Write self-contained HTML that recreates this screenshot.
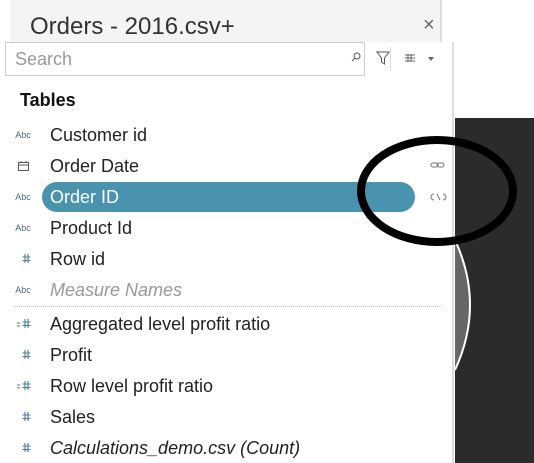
<!DOCTYPE html><html><head><style>
body{margin:0;width:534px;height:463px;overflow:hidden;background:#fff;font-family:"Liberation Sans",sans-serif;position:relative}
.a{position:absolute}
.row{position:absolute;left:50px;font-size:18px;color:#222;line-height:20px}
.ic{position:absolute;font-size:9px;color:#4a6a80;width:30px;left:8px;text-align:center}
</style></head><body>
<div class="a" style="left:10px;top:0;width:430px;height:42px;background:#f4f4f4;border-right:2px solid #ddd"></div>
<div class="a" style="left:30px;top:13px;font-size:24px;color:#333">Orders - 2016.csv+</div>
<div class="a" style="left:423px;top:14px;font-size:20px;color:#666">×</div>
<div class="a" style="left:452px;top:42px;width:2px;height:421px;background:#ddd"></div>
<div class="a" style="left:455px;top:118px;width:79px;height:345px;background:#2b2b2b"></div>
<div class="a" style="left:5px;top:42px;width:358px;height:32px;border:1px solid #ccc;background:#fff"></div>
<div class="a" style="left:15px;top:49px;font-size:18px;color:#999">Search</div>
<svg class="a" style="left:351px;top:52px" width="10" height="10"><circle cx="6" cy="4" r="3" fill="none" stroke="#555"/><path d="M4 6L1 9" stroke="#555"/></svg>
<svg class="a" style="left:376px;top:50px" width="14" height="16"><path d="M1 2h12L8.5 8v6l-3-2V8z" fill="none" stroke="#555"/></svg>
<div class="a" style="left:390px;top:47px;width:1px;height:24px;background:#ddd"></div>
<svg class="a" style="left:405px;top:54px" width="30" height="10"><path d="M0 1h10M0 4h10M0 7h10M3 0v8M6 0v8" stroke="#666" stroke-width="1"/><path d="M23 3h6l-3 4z" fill="#666"/></svg>
<div class="a" style="left:20px;top:90px;font-size:18px;font-weight:bold;color:#111">Tables</div>
<div class="a" style="left:42px;top:182px;width:373px;height:30px;background:#4a93ae;border-radius:15px"></div>
<div class="ic" style="top:130px">Abc</div><div class="row" style="top:125px">Customer id</div>
<svg class="a" style="left:18px;top:161px" width="11" height="10"><rect x="0.5" y="1.5" width="10" height="8" fill="none" stroke="#556"/><path d="M0 4h11M3 0v2M8 0v2" stroke="#556"/></svg><div class="row" style="top:156px">Order Date</div>
<div class="ic" style="top:192px">Abc</div><div class="row" style="top:187px;color:#fff">Order ID</div>
<div class="ic" style="top:223px">Abc</div><div class="row" style="top:218px">Product Id</div>
<div class="ic" style="top:285px">Abc</div><div class="row" style="top:280px;color:#999;font-style:italic">Measure Names</div>
<div class="row" style="top:249px">Row id</div>
<div class="a" style="left:15px;top:306px;width:427px;border-top:1px dotted #bbb"></div>
<div class="row" style="top:314px">Aggregated level profit ratio</div>
<div class="row" style="top:345px">Profit</div>
<div class="row" style="top:376px">Row level profit ratio</div>
<div class="row" style="top:407px">Sales</div>
<div class="row" style="top:438px;font-style:italic">Calculations_demo.csv (Count)</div>
<svg class="a" style="left:0;top:0" width="534" height="463">
<defs><path id="h" d="M-3.5-2h8M-3.5 1.5h8M-1-5v9M2-5v9" stroke="#4a7d95" stroke-width="1.1" fill="none"/></defs>
<use href="#h" x="26" y="259"/><use href="#h" x="26" y="324"/><use href="#h" x="26" y="355"/><use href="#h" x="26" y="386"/><use href="#h" x="26" y="417"/><use href="#h" x="26" y="448"/>
<path d="M17 323h3M17 326h3M17 385h3M17 388h3" stroke="#4a7d95"/>
<g fill="none" stroke="#777" stroke-width="1"><rect x="431" y="163" width="7" height="4" rx="2"/><rect x="437" y="163" width="7" height="4" rx="2"/><path d="M434 194a3 3 0 0 0 0 6M440 200l-3-6M443 194a3 3 0 0 1 0 6"/></g>
<path d="M455 240 Q485 305 455 370 Z" fill="#666"/>
<path d="M455 240 Q485 305 455 370" fill="none" stroke="#fff" stroke-width="2"/>
<ellipse cx="437" cy="191" rx="76" ry="51" fill="none" stroke="#000" stroke-width="8"/>
</svg>
</body></html>
